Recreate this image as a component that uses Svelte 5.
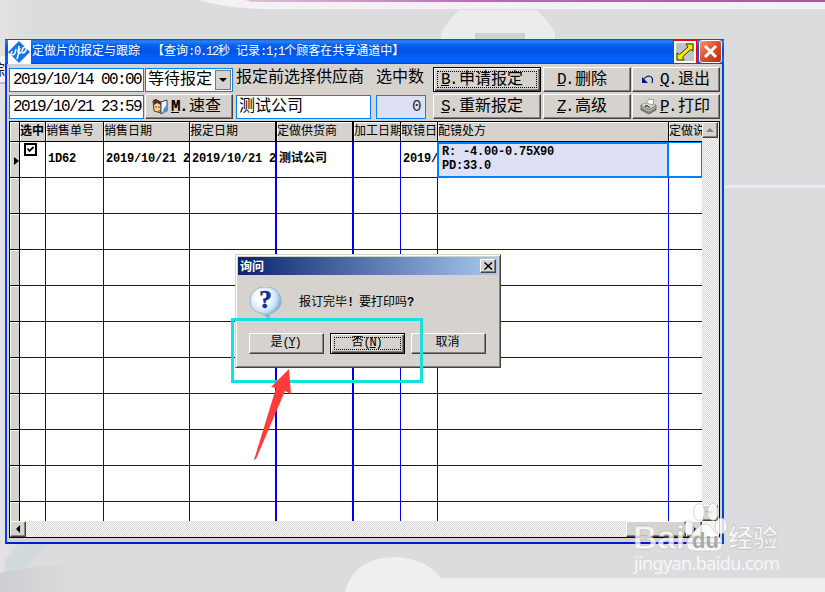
<script>
    const columns = [
        { title: "选中", bold: true, value: "" },
        { title: "销售单号", value: "1D62" },
        { title: "销售日期", value: "2019/10/21 23:59" },
        { title: "报定日期", value: "2019/10/21 23:59", thick: true },
        { title: "定做供货商", value: "测试公司", thick: true },
        { title: "加工日期", value: "" },
        { title: "取镜日期", value: "2019/10/21" },
        { title: "配镜处方", value: "R: -4.00-0.75X90\nPD:33.0", active: true },
        { title: "定做说明", value: "", last: true }
    ]

    const emptyRows = [0, 1, 2, 3, 4, 5, 6, 7, 8, 9]

    // latin runs are set at half the width of a chinese character
    function runs(text) {
        return text.match(/[\x20-\x7e\n]+|[^\x20-\x7e\n]+/g) || []
    }
</script>

{#snippet txt(text)}{#each runs(text) as run}{#if run.charCodeAt(0) < 128}<span class="latin">{run}</span>{:else}{run}{/if}{/each}{/snippet}

{#snippet label(key, text)}<span class="latin key"><u>{key}</u>.</span>{text}{/snippet}

<div class="desktop">
    <svg class="backdrop" width="825" height="592" viewBox="0 0 825 592">
        <defs>
            <linearGradient id="pink" x1="0" x2="1">
                <stop offset="0" stop-color="#d8c5d6" />
                <stop offset="0.4" stop-color="#bd6bb0" />
                <stop offset="1" stop-color="#b64da4" />
            </linearGradient>
            <linearGradient id="edge" x1="0" x2="1">
                <stop offset="0" stop-color="#e4e1e5" />
                <stop offset="1" stop-color="#dcdcde" />
            </linearGradient>
            <linearGradient id="fade" x1="0" x2="1">
                <stop offset="0" stop-color="#cecdd1" />
                <stop offset="1" stop-color="#dcdcde" />
            </linearGradient>
        </defs>
        <rect width="825" height="592" fill="#dcdcde" />
        <rect width="30" height="592" fill="url(#edge)" />
        <path d="M198 0H825V9H260Q225 8 198 0Z" fill="#f4f1f5" />
        <path d="M245 0H825V2H252Z" fill="url(#pink)" />
        <path d="M441 40V34Q449 19 459 10H536Q547 19 555 32V40Z" fill="#ececef" />
        <rect x="475" y="33" width="50" height="7" fill="#d0d0d5" />
        <rect x="724" y="185" width="101" height="3" fill="#ebebef" />
        <path d="M5 573V560L18 544H48L24 569Z" fill="#d3dadd" />
        <path d="M0 573Q30 566 75 565V592H0Z" fill="url(#fade)" />
        <path d="M345 592Q353 558 395 557Q427 559 441 578H825V592Z" fill="#efeff2" />
        <path d="M0 56H5V84H0Z" fill="#f5f2f6" />
        <path d="M0 83H5" stroke="#a56fa0" />
        <text x="-10" y="75" font-size="15" font-family="Noto Sans CJK SC" fill="#222">综</text>
    </svg>

    <main class="window">
        <header class="titlebar">
            <svg class="logo" width="23" height="24" viewBox="0 0 23 24">
                <rect width="23" height="24" fill="#fff" />
                <path d="M11 1L22 12L11 23L0 12Z" fill="#1675e8" />
                <path d="M4 11L3 14Q5 16 7 13L8 9M9 19L12 8M11 6L10 12Q12 15 14 11L15 8Q19 6 18 10Q17 13 14 13" fill="none" stroke="#fff" stroke-width="1.500" />
            </svg>
            <h1>{@render txt("定做片的报定与跟踪  【查询:0.12秒 记录:1;1个顾客在共享通道中】")}</h1>
            <button class="resize" aria-label="还原">
                <svg width="18" height="18" viewBox="0 0 18 18">
                    <rect width="18" height="18" fill="#c0c3ca" />
                    <path d="M10 1H17V8L14.500 6.500L6.500 14L8 17H1V10L3.500 11.500L12 4Z" fill="#f5ea00" stroke="#353500" stroke-width="1" />
                </svg>
            </button>
            <button class="close" aria-label="关闭">
                <svg width="21" height="21" viewBox="0 0 21 21"><path d="M5 5L16 16M16 5L5 16" stroke="#fff" stroke-width="3" /></svg>
            </button>
        </header>

        <section class="toolbar">
            <div class="field">{@render txt("2019/10/14 00:00")}</div>
            <div class="field combo">等待报定<span class="drop"></span></div>
            <div class="caption supplier">报定前选择供应商</div>
            <div class="caption">选中数</div>
            <button class="tool default"><span class="focus"></span>{@render label("B", "申请报定")}</button>
            <button class="tool">{@render label("D", "删除")}</button>
            <button class="tool with-icon">
                <svg width="16" height="14" viewBox="0 0 16 14"><path d="M3 7Q6 3 9 3Q14 4 12 10" fill="none" stroke="#001080" stroke-width="1.200" /><path d="M2 4V10H8Z" fill="#001080" /></svg>
                <span>{@render label("Q", "退出")}</span>
            </button>

            <div class="field">{@render txt("2019/10/21 23:59")}</div>
            <button class="tool with-icon search">
                <svg width="17" height="16" viewBox="0 0 17 16">
                    <path d="M1 2L4 1L9 3V14L2 12Z" fill="#ffd09a" stroke="#553d25" />
                    <path d="M1 1L4 0L9 3V6L5 4L2 6Z" fill="#4b3323" />
                    <path d="M9 3L15 1V11L9 15Z" fill="#eef7ff" stroke="#345" />
                    <path d="M12 9L16 5V12L10 15Z" fill="#4d94c8" />
                    <path d="M4 7V9M7 7V9M6 12H9" stroke="#7b421a" />
                </svg>
                <span><b class="latin key"><u>M</u>.</b>速查</span>
            </button>
            <div class="field company">测试公司</div>
            <div class="field count">{@render txt("0")}</div>
            <button class="tool">{@render label("S", "重新报定")}</button>
            <button class="tool">{@render label("Z", "高级")}</button>
            <button class="tool with-icon">
                <svg width="18" height="17" viewBox="0 0 18 17">
                    <path d="M1 7L8 4L16 7V12L9 16L1 12Z" fill="#85857e" stroke="#55554f" stroke-width="0.700" />
                    <path d="M1 7L8 4L16 7L9 11Z" fill="#dddcd5" />
                    <path d="M6 5L9 1L14 2L13 7Z" fill="#fff" stroke="#777" stroke-width="0.700" />
                    <path d="M1.500 9L9 13L15.500 9" fill="none" stroke="#ccc" />
                    <rect x="5" y="7" width="3" height="2" fill="#f02020" /><rect x="8" y="8" width="2" height="2" fill="#18b030" />
                </svg>
                <span>{@render label("P", "打印")}</span>
            </button>
        </section>

        <section class="grid">
            <div class="table">
                <div class="row head">
                    <div class="mark"></div>
                    {#each columns as col}
                        <div class="cell" class:bold={col.bold} class:thick={col.thick} class:last={col.last}>{col.title}</div>
                    {/each}
                </div>
                <div class="row data">
                    <div class="mark"><i class="pointer"></i></div>
                    {#each columns as col, i}
                        <div class="cell" class:thick={col.thick} class:active={col.active} class:last={col.last}>
                            {#if i == 0}
                                <svg class="check" width="13" height="13" viewBox="0 0 13 13"><rect x="1" y="1" width="11" height="11" fill="#fff" stroke="#000" stroke-width="2" /><path d="M3.500 5.500L5.500 8L9.500 4" fill="none" stroke="#000" stroke-width="1.800" /></svg>
                            {:else}
                                {@render txt(col.value)}
                            {/if}
                        </div>
                    {/each}
                </div>
                {#each emptyRows as row}
                    <div class="row">
                        <div class="mark"></div>
                        {#each columns as col}
                            <div class="cell" class:thick={col.thick} class:last={col.last}></div>
                        {/each}
                    </div>
                {/each}
            </div>
            <div class="vscroll">
                <span class="sbtn"><i class="up"></i></span>
                <span class="sbtn"><i class="down"></i></span>
            </div>
            <div class="hscroll">
                <span class="sbtn"><i class="left"></i></span>
                <span class="thumb"></span>
                <span class="sbtn"><i class="right"></i></span>
            </div>
            <div class="corner"></div>
        </section>
    </main>

    <div class="dialog">
        <div class="dialog-title">
            <span>询问</span>
            <button aria-label="关闭"><svg width="9" height="8" viewBox="0 0 9 8"><path d="M0.500 0.500L8 7.500M8 0.500L0.500 7.500" stroke="#000" stroke-width="1.500" /></svg></button>
        </div>
        <div class="message">
            <svg width="33" height="32" viewBox="0 0 33 32">
                <defs>
                    <radialGradient id="bubble" cx="0.4" cy="0.35" r="0.65">
                        <stop offset="0.3" stop-color="#fff" />
                        <stop offset="0.7" stop-color="#c9e0fb" />
                        <stop offset="1" stop-color="#6f9bd0" />
                    </radialGradient>
                </defs>
                <path d="M16 0C26 0 32 6 32 14C32 21 27 25 20 27V31L12 26C5 25 1 20 1 14C1 6 7 0 16 0Z" fill="url(#bubble)" stroke="#8fa9c8" stroke-width="0.800" />
                <text x="16.500" y="21" text-anchor="middle" font-family="Liberation Serif" font-size="25" font-weight="bold" fill="#0b2f96" stroke="#0b2f96" stroke-width="0.600">?</text>
            </svg>
            <p>报订完毕<b>{@render txt("! ")}</b>要打印吗<b>{@render txt("?")}</b></p>
        </div>
        <div class="actions">
            <button class="tool">是<span class="latin">(<u>Y</u>)</span></button>
            <button class="tool default"><span class="focus"></span>否<span class="latin">(<u>N</u>)</span></button>
            <button class="tool">取消</button>
        </div>
    </div>

    <div class="highlight"></div>
    <svg class="arrow" width="40" height="92" viewBox="0 0 40 92">
        <path d="M37 0L39 25L33 22L4 90L2 91L24 19L19 18Z" fill="#ff3b3b" />
    </svg>

    <svg class="watermark" width="160" height="84" viewBox="0 0 160 84">
        <g fill="#fff" fill-opacity="0.8" stroke="#b5b5b8" stroke-opacity="0.6" stroke-width="0.800">
            <ellipse cx="58" cy="28" rx="5" ry="7" />
            <ellipse cx="68" cy="12" rx="5.500" ry="8.500" />
            <ellipse cx="82" cy="12" rx="5.500" ry="8.500" />
            <ellipse cx="90" cy="26" rx="6" ry="8" />
            <path d="M73 24Q79 24 83 31L90 39Q94 51 83 51H64Q52 50 57 39L66 29Q69 24 73 24Z" />
            <text x="2" y="49" font-family="Liberation Sans" font-size="33" font-weight="bold" textLength="52" lengthAdjust="spacingAndGlyphs">Bai</text>
            <text x="97" y="47" font-family="Noto Sans CJK SC" font-size="25" font-weight="bold">经验</text>
            <text x="3" y="70" font-family="Noto Sans" font-size="18" textLength="146" stroke="none">jingyan.baidu.com</text>
        </g>
        <text x="61" y="48" font-family="Liberation Sans" font-size="22" font-weight="bold" fill="#aaa9a6">du</text>
    </svg>
</div>

<style>
    :global(body) {
        margin: 0;
        overflow: hidden;
    }

    .desktop {
        position: relative;
        box-sizing: border-box;
        width: 825px;
        height: 592px;
        padding: 39px 0 0 5px;
        font-family: "Liberation Mono", "Noto Sans CJK SC", monospace;
        font-size: 12px;
        color: #000;
    }

    .desktop * {
        box-sizing: border-box;
    }

    .backdrop {
        position: absolute;
        left: 0;
        top: 0;
    }

    button {
        font: inherit;
        color: inherit;
        padding: 0;
        border-radius: 0;
    }

    .latin {
        letter-spacing: -0.1em;
        white-space: pre;
    }

    .key {
        margin-right: 2px;
    }

    .window {
        position: relative;
        display: flex;
        flex-direction: column;
        width: 719px;
        height: 505px;
        background: #d6d3ce;
        border: 2px solid #0044df;
        border-top: none;
        border-bottom-color: #0018d8;
    }

    /* title bar */
    .titlebar {
        display: flex;
        align-items: center;
        flex: none;
        height: 25px;
        margin: 0 -2px;
        padding: 0 2px 0 3px;
        color: #fff;
        background: linear-gradient(#0844b0, #2585ff 8%, #0660ee 25%, #0054e3 50%, #0062f8 75%, #0564ff 90%, #0049d2);
    }

    .logo {
        flex: none;
    }

    h1 {
        flex: 1;
        margin: 0 0 0 1px;
        font-size: 12px;
        font-weight: normal;
        line-height: 20px;
        white-space: pre;
    }

    .resize {
        display: flex;
        align-items: center;
        justify-content: center;
        width: 24px;
        height: 24px;
        background: #fff;
        border: 1px solid #f00;
    }

    .close {
        width: 23px;
        height: 23px;
        margin-left: 2px;
        background: linear-gradient(135deg, #f39a80, #e2512d 45%, #bd2a0b);
        border: 1px solid #fff;
        border-radius: 3px;
    }

    .close svg {
        display: block;
    }

    /* toolbar */
    .toolbar {
        display: grid;
        grid-template-columns: 135px 88px 135px 50px 108px 88px 88px;
        grid-template-rows: 25px 25px;
        column-gap: 1px;
        row-gap: 2px;
        flex: none;
        height: 57px;
        padding: 3px 0 0 2px;
        font-size: 16px;
        line-height: 23px;
        white-space: nowrap;
    }

    .toolbar > :nth-child(7n + 3) {
        margin-left: 2px;
        margin-right: -2px;
    }

    .toolbar > :nth-child(7n + 4) {
        margin-left: 6px;
        margin-right: -6px;
    }

    .toolbar > :nth-child(7n + 5) {
        margin-left: 12px;
        margin-right: -12px;
    }

    .toolbar > :nth-child(7n + 6) {
        margin-left: 13px;
        margin-right: -13px;
    }

    .toolbar > :nth-child(7n + 7) {
        margin-left: 13px;
        margin-right: -13px;
    }

    .field {
        height: 24px;
        margin-top: 1px;
        padding-left: 3px;
        background: #fff;
        border: 1px solid #0080ff;
    }

    .combo {
        position: relative;
        padding-left: 2px;
    }

    .drop {
        position: absolute;
        right: 1px;
        top: 1px;
        width: 16px;
        height: 20px;
        background: #d6d3ce;
        border: 1px solid #777;
    }

    .drop::after {
        content: "";
        position: absolute;
        left: 3px;
        top: 7px;
        border: 4px solid transparent;
        border-top-color: #000;
        border-bottom: none;
    }

    .company {
        padding-left: 2px;
    }

    .caption {
        line-height: 23px;
    }

    .count {
        padding-right: 5px;
        text-align: right;
        color: #333;
        background: #dee1f6;
    }

    .tool {
        position: relative;
        background: #d6d3ce;
        border: 1px solid;
        border-color: #fff #424242 #424242 #fff;
        box-shadow: inset -1px -1px #848284;
        line-height: 24px;
        white-space: nowrap;
    }

    .default {
        border-color: #000;
        box-shadow: inset 1px 1px #fff, inset -1px -1px #424242, inset -2px -2px #848284;
    }

    .focus {
        position: absolute;
        inset: 3px;
        border: 1px dotted #000;
    }

    .toolbar .tool.default,
    .toolbar .tool:nth-child(12) {
        padding-right: 10px;
    }

    .toolbar .tool:nth-child(6),
    .toolbar .tool:nth-child(13) {
        padding-right: 10px;
    }

    .with-icon {
        display: flex;
        align-items: center;
        justify-content: space-between;
        padding: 0 9px 0 7px;
    }

    .search {
        padding: 0 11px 0 6px;
    }

    /* data grid */
    .grid {
        display: grid;
        grid-template-columns: 692px 17px;
        grid-template-rows: 399px 16px;
        width: 711px;
        margin-left: 2px;
        border: 1px solid #000;
        background: #fff;
    }

    .table {
        height: 399px;
        overflow: hidden;
    }

    .row {
        display: grid;
        grid-template-columns: 10px 26px 58px 86px 87px 77px 47px 37px 231px 33px;
        height: 36px;
    }

    .head {
        height: 20px;
        line-height: 21px;
    }

    .mark {
        position: relative;
        background: #d6d3ce;
        border-right: 1px solid #000;
        border-bottom: 1px solid #000;
        box-shadow: inset 1px 1px #fff;
    }

    .cell {
        min-width: 0;
        overflow: hidden;
        white-space: nowrap;
        border-right: 1px solid #0000e8;
        border-bottom: 1px solid #0000e8;
    }

    .cell.thick {
        border-right-width: 2px;
    }

    .head .cell {
        background: #d6d3ce;
        border-color: #000;
        box-shadow: inset 1px 1px #fff;
    }

    .head .bold {
        font-weight: bold;
    }

    .data .cell {
        padding-left: 2px;
        font-weight: bold;
        line-height: 35px;
        white-space: pre;
    }

    .data .latin {
        letter-spacing: -0.2px;
    }

    .data .active {
        margin-left: -1px;
        padding: 1px 0 0 3px;
        line-height: 14px;
        background: #dee1f6;
        border: 2px solid #0080ff;
    }

    .cell.last {
        border-right: none;
    }

    .data .last {
        border: 1px solid #0080ff;
        border-width: 1px 1px 2px 0;
    }

    .check {
        display: block;
        margin: 1px 0 0 2px;
    }

    .pointer {
        position: absolute;
        left: 4px;
        top: 15px;
        border: 4px solid transparent;
        border-left: 5px solid #000;
        border-right: none;
    }

    .vscroll,
    .hscroll {
        display: flex;
        justify-content: space-between;
        background: repeating-conic-gradient(#d6d3ce 0 25%, #fff 0 50%) 0 0 / 2px 2px;
    }

    .vscroll {
        flex-direction: column;
    }

    .sbtn,
    .thumb {
        display: flex;
        align-items: center;
        justify-content: center;
        flex: none;
        width: 16px;
        height: 16px;
        background: #d6d3ce;
        border: 1px solid;
        border-color: #fff #424242 #424242 #fff;
        box-shadow: inset -1px -1px #848284;
    }

    .thumb {
        width: 60px;
        margin-left: auto;
    }

    .sbtn i {
        border: 4px solid transparent;
    }

    .sbtn .up {
        border-top: none;
        border-bottom-color: #848284;
    }

    .sbtn .down {
        border-bottom: none;
        border-top-color: #848284;
    }

    .sbtn .left {
        border-left: none;
        border-right-color: #000;
    }

    .sbtn .right {
        border-right: none;
        border-left-color: #000;
    }

    .corner {
        background: #f5f3ee;
    }

    /* message box */
    .dialog {
        position: absolute;
        left: 235px;
        top: 254px;
        width: 266px;
        height: 114px;
        padding: 2px;
        background: #d6d3ce;
        border: 1px solid;
        border-color: #d6d3ce #424242 #424242 #d6d3ce;
        box-shadow: inset 1px 1px #fff, inset -1px -1px #848284;
    }

    .dialog-title {
        display: flex;
        align-items: center;
        justify-content: space-between;
        height: 18px;
        padding: 0 2px;
        color: #fff;
        font-weight: bold;
        background: linear-gradient(90deg, #0a246a, #a6caf0);
    }

    .dialog-title button {
        display: flex;
        align-items: center;
        justify-content: center;
        width: 16px;
        height: 14px;
        background: #d6d3ce;
        border: 1px solid;
        border-color: #fff #424242 #424242 #fff;
        box-shadow: inset -1px -1px #848284;
    }

    .message {
        display: flex;
        height: 58px;
        padding: 12px 0 0 11px;
    }

    .message p {
        margin: 7px 0 0 17px;
        line-height: 18px;
        white-space: nowrap;
    }

    .actions {
        display: flex;
        gap: 6px;
        padding-left: 11px;
    }

    .actions .tool {
        width: 75px;
        height: 21px;
        padding: 0 2px 0 0;
        line-height: 19px;
    }

    /* marks drawn over the window */
    .highlight {
        position: absolute;
        left: 231px;
        top: 318px;
        width: 192px;
        height: 65px;
        border: 3px solid #14e0dc;
    }

    .arrow {
        position: absolute;
        left: 252px;
        top: 369px;
    }

    .watermark {
        position: absolute;
        left: 631px;
        top: 500px;
    }
</style>
